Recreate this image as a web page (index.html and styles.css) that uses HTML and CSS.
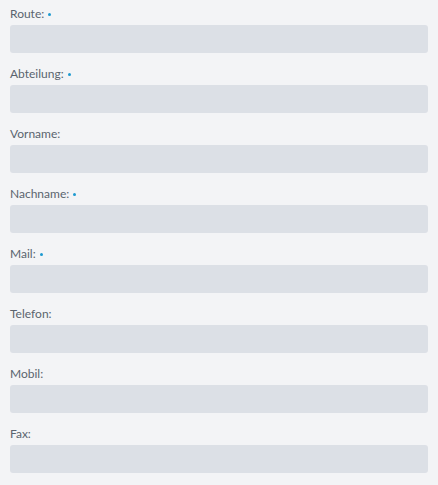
FILE: index.html
```html
<!DOCTYPE html>
<html lang="de">
<head>
    <meta charset="UTF-8">
    <title>Kontakt</title>
    <link rel="stylesheet" href="styles.css">
</head>
<body>

<form class="contact-form">
    <div class="field">
        <label for="route">Route: <span class="req"></span></label>
        <input type="text" id="route">
    </div>
    <div class="field">
        <label for="abteilung">Abteilung: <span class="req"></span></label>
        <input type="text" id="abteilung">
    </div>
    <div class="field">
        <label for="vorname">Vorname:</label>
        <input type="text" id="vorname">
    </div>
    <div class="field">
        <label for="nachname">Nachname: <span class="req"></span></label>
        <input type="text" id="nachname">
    </div>
    <div class="field">
        <label for="mail">Mail: <span class="req"></span></label>
        <input type="text" id="mail">
    </div>
    <div class="field">
        <label for="telefon">Telefon:</label>
        <input type="text" id="telefon">
    </div>
    <div class="field">
        <label for="mobil">Mobil:</label>
        <input type="text" id="mobil">
    </div>
    <div class="field">
        <label for="fax">Fax:</label>
        <input type="text" id="fax">
    </div>
</form>

</body>
</html>
```

FILE: styles.css
```css
body {
    font-family: Lato, "Open Sans", Arial, sans-serif;
    background-color: #f3f4f6;
    margin: 0;
    padding: 0;
}

.contact-form {
    padding: 5px 10px 0 10px;
    display: flex;
    flex-direction: column;
    gap: 4px;
}

.field {
    display: flex;
    flex-direction: column;
    height: 56px;
}

label {
    font-size: 12px;
    color: #5a646e;
    line-height: 17px;
    height: 17px;
    margin-bottom: 3px;
    display: flex;
    align-items: center;
    gap: 4px;
}

.req {
    width: 3px;
    height: 3px;
    border-radius: 50%;
    background-color: #1d9ad0;
    margin-top: 1px;
}

input {
    height: 28px;
    box-sizing: border-box;
    border: none;
    border-radius: 3px;
    background-color: #dce0e6;
    padding: 0 8px;
    font-size: 12px;
    font-family: inherit;
}
```
